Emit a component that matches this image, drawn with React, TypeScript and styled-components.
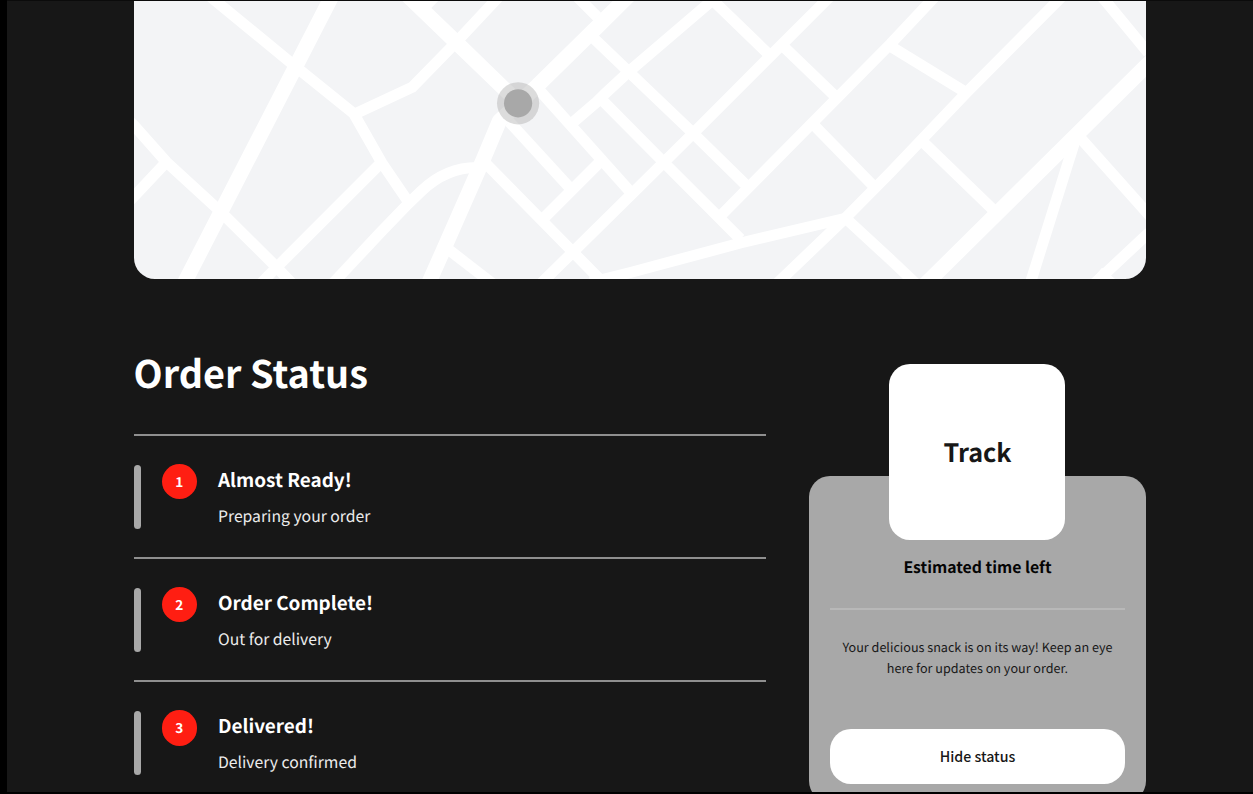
import React from 'react';
import styled, { createGlobalStyle } from 'styled-components';

const GlobalStyle = createGlobalStyle`
  * { box-sizing: border-box; }
  html, body { margin: 0; padding: 0; background: #000; }
  body {
    overflow: hidden;
    font-family: "Noto Sans CJK SC", "Noto Sans", sans-serif;
    text-rendering: geometricPrecision;
  }
  h1, h2, h3, p, ol { margin: 0; padding: 0; }
`;

const Window = styled.div`
  width: 1253px;
  height: 794px;
  padding: 0 0 2px 7px;
  overflow: hidden;
  background: #000;
`;

const Page = styled.main`
  height: 792px;
  padding: 0 107px 0 126.6px;
  overflow: hidden;
  background: #171717;
  border-top: 1px solid #0b0b0b;
`;

const MapCard = styled.section`
  width: 1012.6px;
  height: 279.2px;
  margin-top: -1px;
  border-top: 1px solid #737373;
  border-radius: 0 0 21px 21px;
  overflow: hidden;
  background: #f3f4f6;
`;

const MapDrawing = styled.svg`
  display: block;
  width: 1013px;
  height: 279px;
`;

const Columns = styled.div`
  display: flex;
  justify-content: space-between;
  align-items: flex-start;
  width: 1012.6px;
  padding-top: 68px;
`;

const StatusColumn = styled.section`
  width: 632.8px;
`;

const Heading = styled.h1`
  height: 50px;
  margin-bottom: 37px;
  color: #fff;
  font-size: 37.8px;
  line-height: 50px;
  font-weight: 700;
  white-space: nowrap;
`;

const Steps = styled.ol`
  list-style: none;
`;

const Step = styled.li`
  display: flex;
  align-items: flex-start;
  height: 123.1px;
  padding-top: 28px;
  border-top: 2px solid #8f8f8f;
`;

const StepBar = styled.span`
  width: 7px;
  height: 64px;
  margin: 0.6px 21px 0 0;
  border-radius: 4px;
  background: #a8a8a8;
`;

const StepNumber = styled.span`
  display: grid;
  place-items: center;
  width: 35.2px;
  height: 35.2px;
  margin-right: 21.2px;
  padding-bottom: 1px;
  border-radius: 50%;
  background: #ff1e12;
  color: #fff;
  font-size: 13.6px;
  line-height: 20px;
  font-weight: 700;
`;

const StepTitle = styled.h2`
  height: 34px;
  margin-top: -1px;
  color: #fff;
  font-size: 18.9px;
  line-height: 34px;
  font-weight: 700;
  white-space: nowrap;
`;

const StepText = styled.p`
  padding-top: 5px;
  color: #ececec;
  font-size: 15.75px;
  line-height: 28px;
  white-space: nowrap;
`;

const TrackColumn = styled.aside`
  display: flex;
  flex-direction: column;
  align-items: center;
  width: 337.4px;
  padding-top: 16.4px;
`;

const TrackTile = styled.div`
  position: relative;
  z-index: 1;
  display: grid;
  place-items: center;
  width: 176px;
  height: 176px;
  margin-bottom: -63.5px;
  border-radius: 21px;
  background: #fff;
  color: #171717;
  font-size: 25.2px;
  line-height: 40px;
  font-weight: 700;
`;

const TrackCard = styled.section`
  width: 100%;
  height: 326px;
  padding: 77px 21px 0;
  border-radius: 21px;
  background: #a8a8a8;
  text-align: center;
`;

const CardTitle = styled.h3`
  height: 28px;
  color: #050505;
  font-size: 15.8px;
  line-height: 28px;
  font-weight: 700;
`;

const Divider = styled.div`
  height: 2px;
  margin: 27px 0 25.6px;
  background: #b8b8b8;
`;

const CardText = styled.p`
  height: 42px;
  margin-bottom: 51.4px;
  color: #171717;
  font-size: 12.6px;
  line-height: 21px;
  white-space: nowrap;
`;

const HideButton = styled.button`
  display: block;
  width: 100%;
  height: 55px;
  padding: 0 0 1px;
  border: 0;
  border-radius: 21px;
  background: #fff;
  color: #171717;
  font-family: inherit;
  font-size: 14.2px;
  line-height: 24px;
  font-weight: 500;
`;

const NARROW_ROADS = [
  'M208 -5 L295 66.5 L353.3 113.5 L381.5 163 L408 202',
  'M353.3 114.5 L411.7 87.3 L456 42 L500 -5',
  'M128 120 L134 126 L166 162 L220 211.5 L275 266 L294 286',
  'M166 162 L134 196 L128 202',
  'M258 286 L275 268.5 L380 163.5',
  'M330 286 L380 232.5 L408 203.5 L421 191 Q446 167 478 167.5',
  'M424 7 L436 -5',
  'M509 122 L570 188.5',
  'M544 217.5 L600 161.5',
  'M537 88 L630 192',
  'M573 122 L596.3 102 L604 94.3 L628.3 71.7 L707.5 4 L716 -4',
  'M600 98.3 L667 166 L740 239',
  'M574 -6 L596.7 16.7',
  'M592 37 L628.3 71.7 L692.7 133.3 L746 185.5',
  'M540 284 L572.5 252 L640 185.5 L692.7 133.3 L772 54 L832 -6',
  'M484 162 L572.5 252 L605 285',
  'M444 246.5 L450 251 L494 285',
  'M590 282.5 L630 272.5 L740 243 L846 218',
  'M709 -3 L715 2.7 L769 55',
  'M781 44.5 L834.5 96',
  'M721 215 L890 44 L937 -6',
  'M811 122.5 L873.5 186.5',
  'M774 286 L845 218 L890 172.5 L966.7 92 L1064 -6',
  'M845 218 L890 259.5 L918 286',
  'M888 45 L964 91.5',
  'M919 138.5 L993 210',
  'M1099 -6 L1104.3 0 L1148 53',
  'M1080 138 L1146 212 L1152 219',
  'M1077 133 L1029 286',
  'M1091 286 L1099 279 L1146 235 L1152 230',
  'M1098 272 L1112 284',
];

const WIDE_ROADS = [
  'M333 -7 L329 1 L186 279 L182 287',
  'M404 -7.5 L451.3 38 L517.5 102',
  'M631 -7 L595.3 28.3 L537 85.7 L499 121 L482 161.3 L443 250 L427 286',
  'M923 286 L930.3 279 L1146 65.7 L1152 60',
];

const StreetMap = () => (
  <MapDrawing viewBox="133.6 1 1013 279" aria-label="Map">
    <g fill="none" stroke="#fff" strokeLinejoin="round">
      <g strokeWidth="11">
        {NARROW_ROADS.map((d) => <path key={d} d={d} />)}
      </g>
      <g strokeWidth="15">
        {WIDE_ROADS.map((d) => <path key={d} d={d} />)}
      </g>
    </g>
    <circle cx="517.7" cy="103.3" r="21.1" fill="#a8a8a8" fillOpacity="0.4" />
    <circle cx="517.7" cy="103.3" r="14.1" fill="#a8a8a8" />
  </MapDrawing>
);

const STEPS = [
  { title: 'Almost Ready!', text: 'Preparing your order' },
  { title: 'Order Complete!', text: 'Out for delivery' },
  { title: 'Delivered!', text: 'Delivery confirmed' },
];

export default function App() {
  return (
    <Window>
      <GlobalStyle />
      <Page>
        <MapCard><StreetMap /></MapCard>
        <Columns>
          <StatusColumn>
            <Heading>Order Status</Heading>
            <Steps>
              {STEPS.map((step, i) => (
                <Step key={step.title}>
                  <StepBar />
                  <StepNumber>{i + 1}</StepNumber>
                  <div>
                    <StepTitle>{step.title}</StepTitle>
                    <StepText>{step.text}</StepText>
                  </div>
                </Step>
              ))}
            </Steps>
          </StatusColumn>
          <TrackColumn>
            <TrackTile>Track</TrackTile>
            <TrackCard>
              <CardTitle>Estimated time left</CardTitle>
              <Divider />
              <CardText>
                Your delicious snack is on its way! Keep an eye<br />
                here for updates on your order.
              </CardText>
              <HideButton type="button">Hide status</HideButton>
            </TrackCard>
          </TrackColumn>
        </Columns>
      </Page>
    </Window>
  );
}
